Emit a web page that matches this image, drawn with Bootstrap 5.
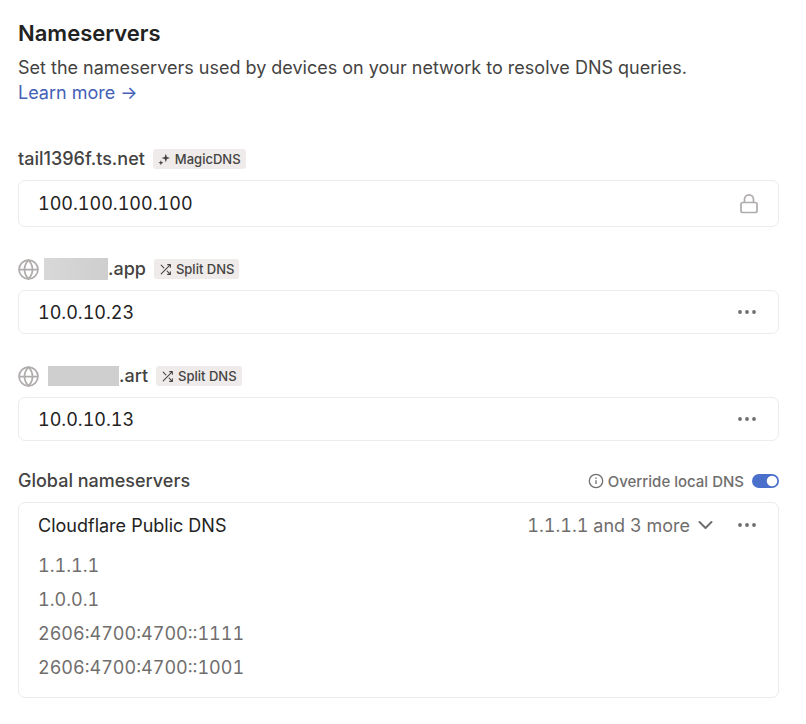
<!DOCTYPE html>
<html lang="en">
<head>
<meta charset="utf-8">
<meta name="viewport" content="width=device-width, initial-scale=1">
<title>Nameservers</title>
<link href="https://cdn.jsdelivr.net/npm/bootstrap@5.3.0/dist/css/bootstrap.min.css" rel="stylesheet">
<style>
body { font-family: Inter, "Liberation Sans", sans-serif; font-size: 18px; line-height: 25px; color: #444342; background: #fff; }
.page { padding: 20px 27px 26px 18px; }
.page-title { font-size: 22px; line-height: 27px; color: #232222; }
.page-link-blue { color: #4460b7; }
.section { margin-top: 30px; }
.section-first { margin-top: 42px; }
.section-last { margin-top: 28px; }
.section-head { height: 24px; margin-bottom: 9px; gap: 8px; }
.section-name { font-size: 18px; line-height: 24px; }
.tag { background: #eeebea; border-radius: 3px; height: 20px; padding: 0 5px; gap: 4px; font-size: 13px; line-height: 20px; }
.panel { border: 1px solid #eeebea; border-radius: 7px; padding: 0 19px; }
.entry { height: 44px; color: #232222; }
.entry-tall { height: 47px; }
.address { font-size: 18px; font-feature-settings: "tnum"; }
.muted { color: #706e6d; }
.redacted { background: linear-gradient(90deg, #d8d8d8, #cecece); width: 64px; height: 22px; }
.redacted-wide { background: #cfcfcf; width: 71px; height: 20px; }
.globe { margin-right: 5px; }
.globe-wide { margin-right: 9px; }
.toggle-label { font-size: 15px; }
.form-check-input.toggle { width: 27px; height: 14px; margin: 0; border: 0; background-color: #4b70cc; background-size: 14px; cursor: pointer;
  background-image: url("data:image/svg+xml,%3csvg xmlns='http://www.w3.org/2000/svg' viewBox='-4 -4 8 8'%3e%3ccircle r='3' fill='%23fff'/%3e%3c/svg%3e"); }
.more-gap { gap: 22px; }
.server-list { padding: 2px 0 12px; }
.server-list li { line-height: 34px; }
</style>
<script src="https://cdn.jsdelivr.net/npm/bootstrap@5.3.0/dist/js/bootstrap.bundle.min.js" defer></script>
</head>
<body>
<svg class="d-none" aria-hidden="true">
  <symbol id="dots" viewBox="0 0 18 6"><g fill="#706e6d"><circle cx="2" cy="3" r="1.9"/><circle cx="9" cy="3" r="1.9"/><circle cx="16" cy="3" r="1.9"/></g></symbol>
  <symbol id="globe" viewBox="0 0 24 24"><g fill="none" stroke="#afacab" stroke-width="2"><circle cx="12" cy="12" r="10.8"/><path d="M1.2 12h21.6M12 1.2c3 3.2 4.6 6.800 4.600 10.800s-1.600 7.600-4.600 10.800c-3-3.200-4.600-6.800-4.600-10.800S9 4.400 12 1.200z"/></g></symbol>
  <symbol id="shuffle" viewBox="0 0 24 24"><path d="M16 3h5v5M4 20 21 3M21 16v5h-5M15 15l6 6M4 4l5 5" fill="none" stroke="#444342" stroke-width="1.900" stroke-linecap="round" stroke-linejoin="round"/></symbol>
</svg>
<main class="page">
  <header>
    <h1 class="page-title fw-semibold mb-2">Nameservers</h1>
    <p class="mb-0">Set the nameservers used by devices on your network to resolve DNS queries.<br>
      <a href="#learn" class="page-link-blue text-decoration-none">Learn more →</a></p>
  </header>

  <section class="section-first">
    <div class="section-head d-flex align-items-center">
      <h2 class="section-name fw-medium mb-0">tail1396f.ts.net</h2>
      <span class="tag d-inline-flex align-items-center fw-medium">
        <svg width="13" height="13" viewBox="0 0 13 13" fill="#444342" aria-hidden="true"><path d="M7.800.8 8.900 3.900 12 5 8.900 6.100 7.800 9.200 6.700 6.100 3.600 5 6.700 3.900z"/><path d="M2.900 7.300 3.600 9.100 5.400 9.800 3.600 10.500 2.900 12.300 2.200 10.500.4 9.800 2.200 9.100z"/></svg>
        MagicDNS</span>
    </div>
    <div class="panel entry entry-tall d-flex align-items-center justify-content-between">
      <span class="address">100.100.100.100</span>
      <svg width="20" height="22" viewBox="0 0 20 22" fill="none" stroke="#afacab" stroke-width="1.700" role="img" aria-label="Locked"><rect x="2" y="9.500" width="16" height="10" rx="1.800"/><path d="M5.500 9.500V6.300a4.500 4.500 0 0 1 9 0v3.200"/></svg>
    </div>
  </section>

  <section class="section">
    <div class="section-head d-flex align-items-center">
      <h2 class="section-name fw-medium mb-0 d-flex align-items-center"><svg class="globe" width="21" height="21" aria-hidden="true"><use href="#globe"/></svg><span class="redacted"></span>.app</h2>
      <span class="tag d-inline-flex align-items-center fw-medium"><svg width="13" height="13" aria-hidden="true"><use href="#shuffle"/></svg>Split DNS</span>
    </div>
    <div class="panel entry d-flex align-items-center justify-content-between">
      <span class="address">10.0.10.23</span>
      <button type="button" class="btn p-0 border-0 d-flex" aria-label="More options"><svg width="24" height="6"><use href="#dots"/></svg></button>
    </div>
  </section>

  <section class="section">
    <div class="section-head d-flex align-items-center">
      <h2 class="section-name fw-medium mb-0 d-flex align-items-center"><svg class="globe-wide" width="21" height="21" aria-hidden="true"><use href="#globe"/></svg><span class="redacted-wide"></span>.art</h2>
      <span class="tag d-inline-flex align-items-center fw-medium"><svg width="13" height="13" aria-hidden="true"><use href="#shuffle"/></svg>Split DNS</span>
    </div>
    <div class="panel entry d-flex align-items-center justify-content-between">
      <span class="address">10.0.10.13</span>
      <button type="button" class="btn p-0 border-0 d-flex" aria-label="More options"><svg width="24" height="6"><use href="#dots"/></svg></button>
    </div>
  </section>

  <section class="section-last">
    <div class="section-head d-flex align-items-center justify-content-between">
      <h2 class="section-name fw-medium mb-0">Global nameservers</h2>
      <div class="d-flex align-items-center muted">
        <svg class="me-1" width="16" height="16" viewBox="0 0 16 16" fill="none" stroke="#706e6d" stroke-width="1.300" aria-hidden="true"><circle cx="8" cy="8" r="6.700"/><path d="M8 7.300v3.600M8 4.600v1.400"/></svg>
        <label class="toggle-label fw-medium" for="override">Override local DNS</label>
        <div class="form-switch p-0 d-flex ms-2"><input class="form-check-input toggle" type="checkbox" role="switch" id="override" checked></div>
      </div>
    </div>
    <div class="panel">
      <div class="entry d-flex align-items-center justify-content-between">
        <span>Cloudflare Public DNS</span>
        <div class="d-flex align-items-center more-gap">
          <button type="button" class="btn p-0 border-0 address muted d-flex align-items-center gap-2" data-bs-toggle="collapse" data-bs-target="#servers" aria-expanded="true" aria-controls="servers">1.1.1.1 and 3 more
            <svg width="15" height="10" viewBox="0 0 15 10" fill="none" stroke="#706e6d" stroke-width="2" stroke-linecap="round" stroke-linejoin="round" aria-hidden="true"><path d="M1.500 2l6 6 6-6"/></svg></button>
          <button type="button" class="btn p-0 border-0 d-flex" aria-label="More options"><svg width="24" height="6"><use href="#dots"/></svg></button>
        </div>
      </div>
      <div class="collapse show" id="servers">
        <ul class="list-unstyled mb-0 server-list address muted">
          <li>1.1.1.1</li>
          <li>1.0.0.1</li>
          <li>2606:4700:4700::1111</li>
          <li>2606:4700:4700::1001</li>
        </ul>
      </div>
    </div>
  </section>
</main>
</body>
</html>
